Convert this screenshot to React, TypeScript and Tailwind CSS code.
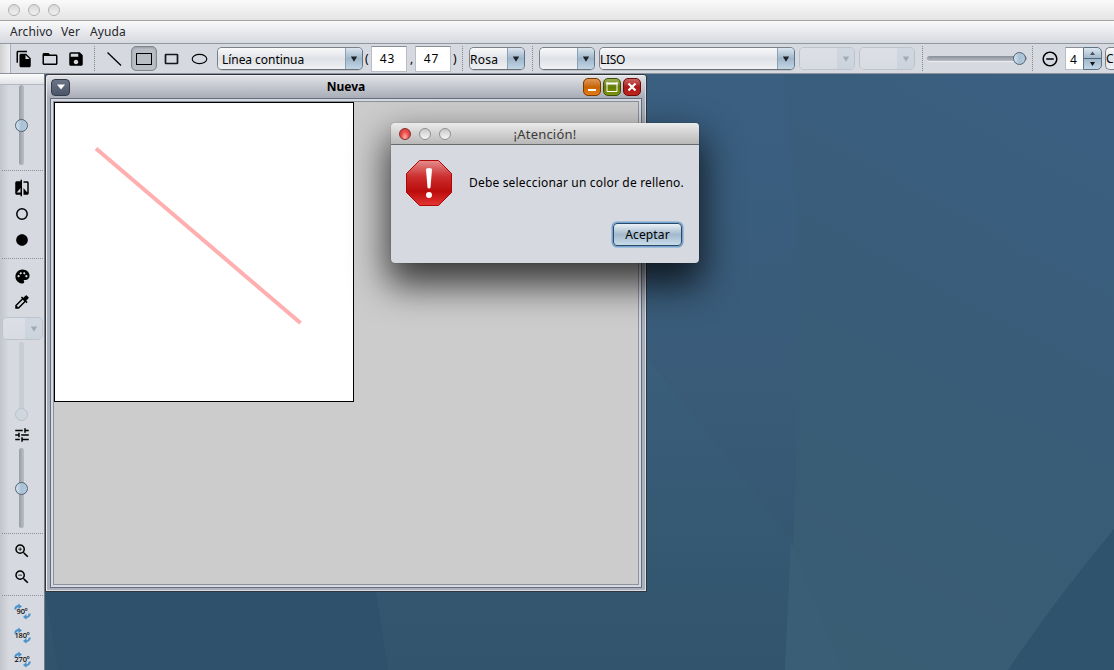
import type { ReactNode } from 'react';
import {
  MdFileCopy, MdFolderOpen, MdSave, MdCompare, MdLens,
  MdPalette, MdColorize, MdTune, MdZoomIn, MdZoomOut, MdRemoveCircleOutline,
} from 'react-icons/md';

function Slot({ className, children }: { className: string; children?: ReactNode }) {
  return <div className={`shrink-0 flex items-center justify-center ${className}`}>{children}</div>;
}

function ToolSeparator({ className }: { className: string }) {
  return <div className={`h-[25px] w-0 shrink-0 border-l border-dotted border-[#7f848d] ${className}`} />;
}

function SideSeparator({ className }: { className: string }) {
  return <div className={`ml-0.5 h-0 w-[41px] shrink-0 self-start border-t border-dotted border-[#8b8f98] ${className}`} />;
}

function Combo({ className, label, disabled, pad }: { className: string; label?: string; disabled?: boolean; pad?: string }) {
  return (
    <div className={`flex h-[23px] shrink-0 overflow-hidden rounded-[5px] border ${disabled ? 'border-[#bcc3cd]' : 'border-[#7c8189] border-r-[#5d7386] border-b-[#6b7077] shadow-[0_1px_0_#bfc3ca]'} ${className}`}>
      <div className={`flex min-w-0 flex-1 items-center bg-linear-to-b ${disabled ? 'from-[#dcdfe5] to-[#d8dbe1]' : 'from-[#fafafb] via-[#dfe2e6] to-[#eff1f4]'} ${pad ?? ''}`}>
        <span className="whitespace-nowrap pt-[2px]">{label}</span>
      </div>
      <div className={`flex w-[17px] shrink-0 items-center justify-center bg-linear-to-b ${disabled ? 'from-[#d0d7e0] to-[#cbd3dc]' : 'from-[#dce6ef] via-[#9fb6ca] to-[#c2d6e6] shadow-[inset_1px_0_0_#8aa0b4]'}`}>
        <svg width="8" height="6" viewBox="0 0 8 6"><path d="M.8.5h6.4L4 5.8z" fill={disabled ? '#a3aab3' : '#202428'} /></svg>
      </div>
    </div>
  );
}

function Thumb({ disabled, className }: { disabled?: boolean; className?: string }) {
  return <div className={`size-[13px] shrink-0 rounded-full border ${disabled ? 'border-[#b8c1cc] bg-[#cfd6de]' : 'border-[#4f6375] bg-linear-to-r from-[#d4e2ee] via-[#a9c1d5] to-[#b5cbdc]'} ${className ?? ''}`} />;
}

function VSlider({ className, thumb, disabled }: { className: string; thumb: string; disabled?: boolean }) {
  return (
    <div className={`ml-[15px] flex w-[13px] shrink-0 justify-center self-start rounded-full ${className}`}>
      <div className={`flex h-full w-[5px] justify-center rounded-full ${disabled ? 'bg-[#c7ccd5]' : 'bg-linear-to-r from-[#989ca5] to-[#babec7]'} ${thumb}`}>
        <Thumb disabled={disabled} />
      </div>
    </div>
  );
}

function Lights({ red, className }: { red?: boolean; className: string }) {
  const plain = 'border-[#8f8f8f] bg-linear-to-b from-[#c9c9c9] to-[#f6f6f6]';
  return (
    <div className={`flex gap-[8px] ${className}`}>
      <span className={`size-[12px] rounded-full border ${red ? 'border-[#8d2b2a] bg-radial-[at_50%_85%] from-[#ffb3a8] via-[#ee504c] to-[#b83232]' : plain}`} />
      <span className={`size-[12px] rounded-full border ${plain}`} />
      <span className={`size-[12px] rounded-full border ${plain}`} />
    </div>
  );
}

function Rotate({ label, className }: { label: string; className: string }) {
  return (
    <div className={`relative ml-px flex h-[17px] w-[17px] shrink-0 items-center justify-center ${className}`}>
      <svg className="absolute inset-0" width="17" height="17" viewBox="0 0 17 17">
        <path d="M1.200 6.500Q1.500 3 5 3" fill="none" stroke="#4a93cc" strokeWidth="2" />
        <path d="M4.300.5L8 3.600 4.300 6.200z" fill="#4a93cc" />
        <path d="M15.800 10.500Q15.500 14 12 14.200" fill="none" stroke="#4a93cc" strokeWidth="2" />
        <path d="M12.500 11L9 14l3.500 2.800z" fill="#4a93cc" />
      </svg>
      <span className="relative mt-px text-[7.5px] leading-none font-medium tracking-[-0.2px]">{label}</span>
    </div>
  );
}

function Toolbar() {
  return (
    <div className="flex h-[30px] shrink-0 items-center overflow-hidden border-b border-[#8d9199] bg-[#d6d9e0]">
      <div className="h-full w-[11px] shrink-0 border-r border-[#a8adb7] bg-linear-to-r from-[#d0d0d2] to-[#eceef1]" />
      <Slot className="w-[26px]"><MdFileCopy size={18} /></Slot>
      <Slot className="w-[26px]"><MdFolderOpen size={18} /></Slot>
      <Slot className="w-[26px]"><MdSave size={18} /></Slot>
      <ToolSeparator className="ml-[5px]" />
      <Slot className="ml-[6px] w-[26px]">
        <svg width="16" height="16"><path d="M1.500 1.500L15 14.500" stroke="#000" strokeWidth="1.300" /></svg>
      </Slot>
      <Slot className="ml-[4px] h-[25px] w-[26px] rounded-[5px] border border-[#83878f] bg-[#b9bdc6] shadow-[inset_0_1px_2px_#9599a2]">
        <svg width="16" height="12"><path d="M.5.5h14.500v10.500H.5z" fill="none" stroke="#000" shapeRendering="crispEdges" /></svg>
      </Slot>
      <Slot className="w-[30px] pr-px">
        <svg width="15" height="12"><rect x="1.500" y="1.500" width="12" height="9" rx=".5" fill="none" stroke="#15171a" strokeWidth="1.700" /></svg>
      </Slot>
      <Slot className="w-[25px]">
        <svg width="17" height="12"><ellipse cx="8.500" cy="6" rx="7.300" ry="4.600" fill="none" stroke="#000" strokeWidth="1.100" /></svg>
      </Slot>
      <Combo className="ml-[5px] w-[146px]" label="Línea continua" pad="pl-1 tracking-[-0.05px]" />
      <span className="w-[8px] shrink-0 pl-[2px]">(</span>
      <div className="flex h-[26px] w-[36px] shrink-0 items-center justify-center border border-[#b9bdc5] border-t-[#8b8f97] bg-white pr-[3px] tracking-[0.9px]">43</div>
      <span className="w-[8px] shrink-0 pl-[3px]">,</span>
      <div className="flex h-[26px] w-[36px] shrink-0 items-center justify-center border border-[#b9bdc5] border-t-[#8b8f97] bg-white pr-[3px] tracking-[0.9px]">47</div>
      <span className="w-[11px] shrink-0 pl-[2px]">)</span>
      <ToolSeparator className="" />
      <Combo className="ml-[6px] w-[56px]" label="Rosa" pad="tracking-[0.3px]" />
      <ToolSeparator className="ml-[7px]" />
      <Combo className="ml-[6px] w-[56px]" />
      <Combo className="ml-[4px] w-[196px]" label="LISO" pad="tracking-[-0.3px]" />
      <Combo className="ml-[4px] w-[56px]" disabled />
      <Combo className="ml-[4px] w-[56px]" disabled />
      <ToolSeparator className="ml-[7px]" />
      <div className="ml-[4px] flex h-[5px] w-[100px] shrink-0 items-center justify-end rounded-full bg-linear-to-b from-[#8b8f98] to-[#b8bcc5] shadow-[0_1px_0_#eceef2]"><Thumb className="mr-px" /></div>
      <ToolSeparator className="ml-[5px]" />
      <Slot className="ml-[4px] w-[26px]"><MdRemoveCircleOutline size={18} /></Slot>
      <div className="ml-[2px] flex h-[23px] w-[37px] shrink-0">
        <div className="flex w-[18px] items-center border border-r-0 border-[#b9bdc5] border-t-[#8b8f97] bg-white pt-[2px] pl-[4px]">4</div>
        <div className="flex w-[19px] flex-col items-center rounded-r-[5px] border border-[#5d7386] bg-linear-to-b from-[#dce6ef] via-[#9fb6ca] to-[#c2d6e6]">
          <svg width="17" height="21"><path d="M6 7h5L8.500 3.500z" fill="#4a525a" /><path d="M0 10.500h17" stroke="#50677b" /><path d="M6 14h5l-2.500 4z" fill="#101418" /></svg>
        </div>
      </div>
      <div className="ml-[3px] flex h-[23px] w-[9px] shrink-0 items-center rounded-l-[5px] border border-r-0 border-[#7c8189] bg-linear-to-b from-[#fafafb] via-[#dfe2e6] to-[#eff1f4] pt-px">C</div>
    </div>
  );
}

function Sidebar() {
  return (
    <div className="flex w-[45px] shrink-0 flex-col items-center overflow-hidden border-r border-[#777b84] bg-linear-to-r from-[#c2c5cb] via-[#d6d9e0] via-20% to-[#d6d9e0] pr-px">
      <div className="h-[11px] w-[45px] shrink-0 border-b border-[#b4b8c1] bg-linear-to-b from-[#fcfcfd] to-[#dfe2e7]" />
      <VSlider className="h-[80px]" thumb="pt-[34px]" />
      <SideSeparator className="mt-[5px]" />
      <Slot className="mt-[8px] ml-px h-[18px]"><MdCompare size={18} /></Slot>
      <Slot className="mt-[8px] ml-px h-[18px]">
        <svg width="14" height="14"><circle cx="7" cy="7" r="5.200" fill="none" stroke="#000" strokeWidth="1.500" /></svg>
      </Slot>
      <Slot className="mt-[8px] ml-px h-[18px]"><MdLens size={14} /></Slot>
      <SideSeparator className="mt-[9px]" />
      <Slot className="mt-[8px] ml-px h-[18px]"><MdPalette size={17} /></Slot>
      <Slot className="mt-[8px] ml-px h-[18px]"><MdColorize size={18} /></Slot>
      <Combo className="mt-[6px] ml-[2px] w-[41px]" disabled />
      <VSlider className="mt-[2px] h-[79px]" thumb="pt-[66px]" disabled />
      <Slot className="mt-[5px] ml-px h-[18px]"><MdTune size={18} /></Slot>
      <VSlider className="mt-[4px] h-[80px]" thumb="pt-[34px]" />
      <SideSeparator className="mt-[5px]" />
      <Slot className="mt-[8px] ml-px h-[18px]"><MdZoomIn size={18} /></Slot>
      <Slot className="mt-[8px] ml-px h-[18px]"><MdZoomOut size={18} /></Slot>
      <SideSeparator className="mt-[9px]" />
      <Rotate className="mt-[7px]" label="90º" />
      <Rotate className="mt-[7px]" label="180º" />
      <Rotate className="mt-[7px]" label="270º" />
    </div>
  );
}

function Wallpaper() {
  return (
    <svg className="absolute inset-0" width="1069" height="596" viewBox="45 74 1069 596">
      <defs>
        <linearGradient id="sky" x1="0" y1="0" x2="0" y2="1">
          <stop offset="0" stopColor="#3a5f81" />
          <stop offset=".55" stopColor="#395b78" />
          <stop offset="1" stopColor="#31536c" />
        </linearGradient>
        <linearGradient id="facet" x1=".7" y1="0" x2=".4" y2="1">
          <stop offset="0" stopColor="#3a5f80" />
          <stop offset=".5" stopColor="#395c78" />
          <stop offset="1" stopColor="#395d73" />
        </linearGradient>
        <linearGradient id="wedge" x1="0" y1="0" x2="0" y2="1">
          <stop offset="0" stopColor="#3a5f7b" />
          <stop offset="1" stopColor="#32546d" />
        </linearGradient>
      </defs>
      <path d="M45 74h1069v596H45z" fill="url(#sky)" />
      <path d="M783 74h331v596H785Q801 480 797 220Z" fill="url(#facet)" />
      <path d="M646 357L791 539L785 670H388L376 592H646Z" fill="url(#wedge)" />
      <path d="M791 542L840 670H785Z" fill="#3b5e77" />
      <path d="M791 542L842 670H785Z" fill="#3b5e77" />
      <path d="M1114 471V670H1008Q1055 600 1114 529Z" fill="#30536d" />
      <path d="M45 592H376L388 670H58Z" fill="#2f516b" />
    </svg>
  );
}

function DrawingWindow() {
  const button = 'flex size-[18px] items-center justify-center rounded-[5px] border';
  return (
    <div className="absolute top-0 left-0 flex h-[518px] w-[602px] flex-col rounded-t-[3px] border border-[#30353c] bg-[#a9afbb] p-px shadow-[inset_1px_1px_0_#eceef2,inset_-1px_-1px_0_#d9dde4]">
      <div className="flex h-[22px] shrink-0 items-center bg-linear-to-b from-[#dfe1e5] to-[#a9adb7] pr-[4px] pl-[4px]">
        <div className="flex h-[17px] w-[19px] items-center justify-center rounded-[4px] border border-[#343c49] bg-linear-to-b from-[#6c7585] to-[#4b566a]">
          <svg width="8" height="6"><path d="M0 .5h8L4 5.500z" fill="#fff" /></svg>
        </div>
        <div className="flex-1 pl-[39px] text-center font-bold">Nueva</div>
        <div className="flex gap-[2px]">
          <div className={`${button} border-[#7d3a00] bg-linear-to-b from-[#df9852] via-[#c76500] to-[#e27c18]`}><svg width="10" height="10"><path d="M1 8h8" stroke="#fff" strokeWidth="2" /></svg></div>
          <div className={`${button} border-[#3d4d0c] bg-linear-to-b from-[#9db052] via-[#667c00] to-[#7f9612]`}><svg width="12" height="10"><path d="M1 0v9.500M11 0v9.500M1 9.500h10" stroke="#fff" fill="none" /><path d="M.5 1.500h11" stroke="#fff" strokeWidth="2" /></svg></div>
          <div className={`${button} border-[#6e0b0b] bg-linear-to-b from-[#cc6260] via-[#a91818] to-[#c02420]`}><svg width="10" height="10"><path d="M1.500 1.500l7 7M8.500 1.500l-7 7" stroke="#fff" strokeWidth="2.200" /></svg></div>
        </div>
      </div>
      <div className="mx-[3px] mb-[2px] flex-1 border border-[#666f80] bg-[#d6d9e0] p-[2px]">
        <div className="h-full border border-[#8c929d] bg-[#ccc]">
          <svg className="block" width="300" height="300">
            <rect x=".5" y=".5" width="299" height="299" fill="#fff" stroke="#000" />
            <path d="M42 46.500L246.500 221" stroke="#ffafaf" strokeWidth="4" />
          </svg>
        </div>
      </div>
    </div>
  );
}

function AlertDialog() {
  return (
    <div className="absolute top-[49px] left-[346px] flex h-[140px] w-[308px] flex-col overflow-visible rounded-[4px] bg-[#d6d9e0] shadow-[0_18px_36px_4px_rgba(0,0,0,0.72),0_0_1px_rgba(0,0,0,0.6)]">
      <div className="relative flex h-[22px] shrink-0 items-center justify-center rounded-t-[4px] border-b border-[#6b6b6b] bg-linear-to-b from-[#ebebeb] to-[#b8b8b8]">
        <Lights red className="absolute top-[5px] left-[8px]" />
        <span className="text-[13px] tracking-[0.2px] text-[#3a3a3a]">¡Atención!</span>
      </div>
      <div className="flex items-center pt-[14px] pl-[14px]">
        <svg className="shrink-0" width="48" height="48">
          <defs>
            <linearGradient id="stop" x1="0" y1="0" x2="0" y2="1">
              <stop offset="0" stopColor="#e58e8e" />
              <stop offset=".35" stopColor="#cd3030" />
              <stop offset=".68" stopColor="#bb0c0c" />
              <stop offset="1" stopColor="#e43535" />
            </linearGradient>
          </defs>
          <path d="M14.500 1.500h19L46.500 14.500v19L33.500 46.500h-19L1.500 33.500v-19z" fill="url(#stop)" stroke="#b00606" />
          <path d="M21 10.500q0-1.500 3-1.500t3 1.500l-1.500 18q-.2 1-1.500 1t-1.500-1z" fill="#fff" />
          <circle cx="24" cy="36" r="3" fill="#fff" />
        </svg>
        <span className="pl-[16px] whitespace-nowrap tracking-[0.18px]">Debe seleccionar un color de relleno.</span>
      </div>
      <div className="flex justify-end pt-[16px] pr-[17px]">
        <button className="h-[23px] w-[69px] rounded-[4px] border border-[#2c4a66] bg-linear-to-b from-[#eaf1f7] via-[#a3b9cc] to-[#c8dcea] pt-px leading-[20px] tracking-[0.15px] shadow-[0_0_0_1.5px_#73a4d1]">Aceptar</button>
      </div>
    </div>
  );
}

export default function App() {
  return (
    <div className="flex h-[670px] w-[1114px] flex-col overflow-hidden bg-[#d6d9e0] font-['Noto_Sans',sans-serif] text-[12px] leading-[16px] text-black">
      <div className="flex h-[21px] shrink-0 border-b border-[#a3a3a3] bg-linear-to-b from-[#fafafa] to-[#e4e4e4] pt-[4px] pl-[8px]">
        <Lights className="opacity-65" />
      </div>
      <div className="flex h-[23px] shrink-0 items-center gap-[9px] border-b border-[#9297a0] bg-linear-to-b from-[#fafafb] to-[#d6d9e0] pl-[10px] tracking-[0.1px] text-[#26282b]">
        <span className="w-[42px]">Archivo</span>
        <span className="w-[20px]">Ver</span>
        <span>Ayuda</span>
      </div>
      <Toolbar />
      <div className="flex min-h-0 flex-1">
        <Sidebar />
        <div className="relative flex-1 overflow-hidden">
          <Wallpaper />
          <DrawingWindow />
          <AlertDialog />
        </div>
      </div>
    </div>
  );
}
